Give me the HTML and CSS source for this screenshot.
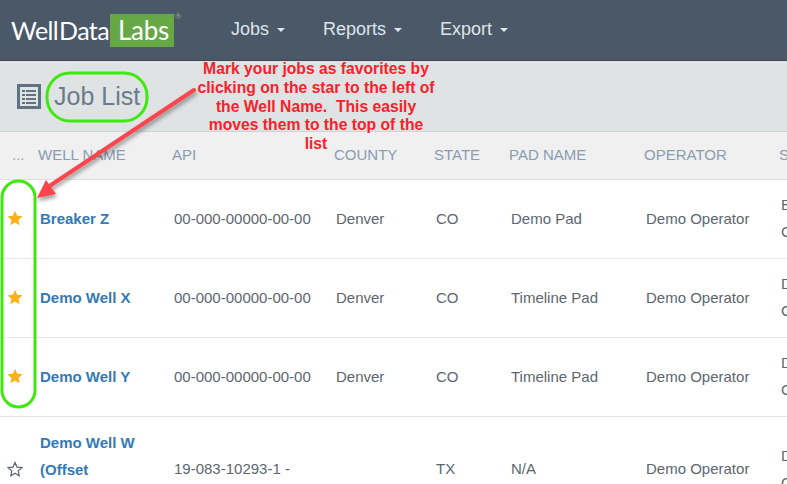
FILE: index.html
```html
<!DOCTYPE html>
<html lang="en">
<head>
<meta charset="utf-8">
<title>Job List</title>
<link rel="stylesheet" href="styles.css">
</head>
<body>
<nav class="navbar">
  <div class="logo">
    <span class="logo-well">Well</span><span class="logo-data">Data</span><span class="logo-labs">Labs</span><span class="logo-reg">®</span>
  </div>
  <ul class="menu">
    <li class="menu-item">Jobs <span class="caret"></span></li>
    <li class="menu-item">Reports <span class="caret"></span></li>
    <li class="menu-item">Export <span class="caret"></span></li>
  </ul>
</nav>
<header class="titlebar">
  <svg class="list-icon" width="24" height="25" viewBox="0 0 24 25">
    <rect x="1.5" y="1.5" width="21" height="22" fill="none" stroke="#5f7184" stroke-width="3"/>
    <g fill="#5f7184">
      <rect x="5" y="6" width="3" height="2"/><rect x="9" y="6" width="10" height="2"/>
      <rect x="5" y="10" width="3" height="2"/><rect x="9" y="10" width="10" height="2"/>
      <rect x="5" y="14" width="3" height="2"/><rect x="9" y="14" width="10" height="2"/>
      <rect x="5" y="18" width="3" height="2"/><rect x="9" y="18" width="10" height="2"/>
    </g>
  </svg>
  <h1 class="title">Job List</h1>
</header>
<div class="table">
  <div class="row head">
    <div class="dots">...</div><div>WELL NAME</div><div>API</div><div>COUNTY</div><div>STATE</div><div>PAD NAME</div><div>OPERATOR</div><div>S</div>
  </div>
  <div class="row body">
    <div class="star-cell"><svg class="star" viewBox="0 0 16 16"><use href="#star"/></svg></div>
    <div class="name">Breaker Z</div><div>00-000-00000-00-00</div><div>Denver</div><div>CO</div><div>Demo Pad</div><div>Demo Operator</div><div class="last">Ba<br>Co</div>
  </div>
  <div class="row body">
    <div class="star-cell"><svg class="star" viewBox="0 0 16 16"><use href="#star"/></svg></div>
    <div class="name">Demo Well X</div><div>00-000-00000-00-00</div><div>Denver</div><div>CO</div><div>Timeline Pad</div><div>Demo Operator</div><div class="last">De<br>Co</div>
  </div>
  <div class="row body">
    <div class="star-cell"><svg class="star" viewBox="0 0 16 16"><use href="#star"/></svg></div>
    <div class="name">Demo Well Y</div><div>00-000-00000-00-00</div><div>Denver</div><div>CO</div><div>Timeline Pad</div><div>Demo Operator</div><div class="last">De<br>Co</div>
  </div>
  <div class="row body tall">
    <div class="star-cell"><svg class="star" viewBox="0 0 16 16"><use href="#star-o"/></svg></div>
    <div class="name name-wrapped">Demo Well W<br>(Offset<br>Well)</div><div>19-083-10293-1 -</div><div></div><div>TX</div><div>N/A</div><div>Demo Operator</div><div class="last">De<br>Co</div>
  </div>
</div>

<svg class="defs" width="0" height="0">
  <defs>
    <path id="star" d="M8 .8l2.2 4.9 5.3.6-4 3.6 1.1 5.3L8 12.500l-4.600 2.700 1.100-5.300-4-3.600 5.300-.6z" fill="#fdb116"/>
    <path id="star-o" d="M8 1.600l2 4.500 4.900.5-3.700 3.300 1 4.800L8 12.300l-4.200 2.400 1-4.800L1.100 6.600l4.900-.5z" fill="none" stroke="#5d6670" stroke-width="1.200"/>
  </defs>
</svg>

<svg class="overlay" width="787" height="484" viewBox="0 0 787 484">
  <defs>
    <filter id="shadow" x="-20%" y="-20%" width="140%" height="140%">
      <feDropShadow dx="1" dy="3" stdDeviation="2" flood-color="#000" flood-opacity=".4"/>
    </filter>
  </defs>
  <rect x="47" y="73" width="100" height="48" rx="23" fill="none" stroke="#3fe80e" stroke-width="3"/>
  <rect x="2" y="181" width="33" height="226" rx="16.500" fill="none" stroke="#3fe80e" stroke-width="3"/>
  <g filter="url(#shadow)">
    <line x1="194" y1="90" x2="48" y2="187" stroke="#f9454c" stroke-width="4" stroke-linecap="round"/>
    <path d="M37 198l9-18 10 14z" fill="#f9454c"/>
  </g>
</svg>
<p class="note">Mark your jobs as favorites by<br>clicking on the star to the left of<br>the Well Name.&nbsp; This easily<br>moves them to the top of the<br>list</p>
</body>
</html>
```
FILE: styles.css
```css
* { box-sizing: border-box; }
html, body { margin: 0; height: 484px; overflow: hidden; }
body {
  position: relative;
  width: 787px;
  background: #fff;
  font-family: "Liberation Sans", Arial, sans-serif;
  font-size: 15px;
  color: #5d6670;
}
.navbar {
  height: 61px;
  background: #4a5868;
  border-bottom: 1px solid #3d4857;
  display: flex;
  align-items: center;
}
.logo {
  width: 231px;
  display: flex;
  align-items: center;
  position: relative;
  color: #fff;
  font-family: Lato, sans-serif;
  font-size: 25px;
  letter-spacing: -.6px;
  padding-left: 11px;
}
.logo-well { margin-right: 1px; }
.logo-labs {
  background: #66a746;
  width: 64px;
  height: 33px;
  line-height: 32px;
  margin-left: 1px;
  padding-left: 8px;
  font-size: 26px;
  letter-spacing: -.3px;
}
.logo-reg {
  position: absolute;
  left: 175px;
  top: -3px;
  font-size: 8px;
  letter-spacing: 0;
  color: #8fae82;
}
.menu {
  list-style: none;
  margin: 0;
  padding: 0 0 2px;
  display: flex;
  gap: 38px;
  color: #dfe5ea;
  font-size: 18px;
}
.caret {
  display: inline-block;
  width: 0;
  height: 0;
  margin-left: 3px;
  vertical-align: 3px;
  border-left: 4.500px solid transparent;
  border-right: 4.500px solid transparent;
  border-top: 4.500px solid #dfe5ea;
}
.titlebar {
  height: 71px;
  background: #dfe3e4;
  border-bottom: 1px solid #cfd4da;
  display: flex;
  align-items: center;
  padding: 0 0 0 17px;
  gap: 13px;
}
.title {
  margin: 0;
  font-size: 25px;
  font-weight: 400;
  color: #6b7b8c;
}
.row {
  display: grid;
  grid-template-columns: 38px 134px 162px 100px 75px 135px 135px 8px;
  align-items: center;
  white-space: nowrap;
  padding-bottom: 2px;
}
.head {
  height: 48px;
  background: #f0f0f0;
  border-bottom: 1px solid #dfe2e5;
  color: #8a9cb0;
}
.dots { padding-left: 12px; color: #9aa5b0; }
.body {
  height: 79px;
  border-bottom: 1px solid #e8e8e8;
  line-height: 27px;
}
.body > div { padding-left: 2px; }
.body > .star-cell { padding-left: 7px; display: flex; }
.body > .name {
  font-weight: 700;
  color: #337ab7;
}
.body > .name-wrapped { padding-top: 2px; }
.last { overflow: hidden; }
.tall { height: 106px; }
.star { width: 16px; height: 16px; }
.defs { position: absolute; }
.overlay { position: absolute; left: 0; top: 0; pointer-events: none; }
.note {
  position: absolute;
  left: 196px;
  top: 60px;
  width: 240px;
  margin: 0;
  text-align: center;
  white-space: nowrap;
  color: #f6222b;
  font-size: 15.700px;
  font-weight: 700;
  line-height: 18.800px;
}
```
